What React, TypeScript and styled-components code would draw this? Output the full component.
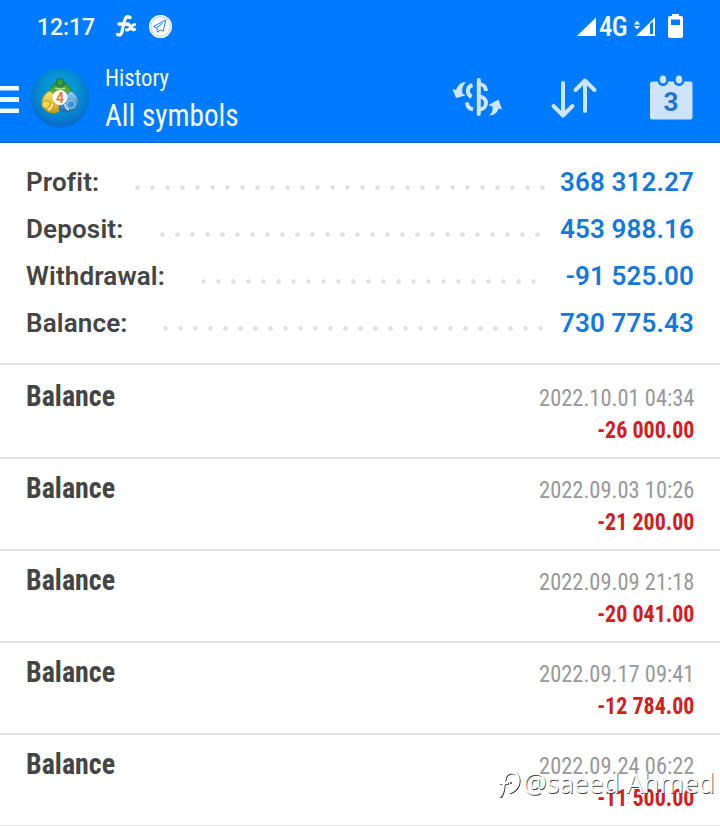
import React from "react";
import styled, { createGlobalStyle } from "styled-components";

const Global = createGlobalStyle`
  * { box-sizing: border-box; }
  body { margin: 0; background: #fff; overflow: hidden; font-family: Roboto, "Liberation Sans", sans-serif; }
`;

const Screen = styled.main`
  position: relative;
  width: 720px;
  height: 826px;
  overflow: hidden;
  background: #fff;
`;

const Header = styled.header`
  height: 143px;
  background: #007aff;
  border-bottom: 1px solid #0a68cf;
  color: #f4fbff;
`;

const StatusBar = styled.div`
  display: flex;
  align-items: center;
  height: 54px;
  padding: 0 36px 0 37px;
`;

const Clock = styled.span`
  width: 77px;
  font-size: 23px;
  font-weight: 500;
  letter-spacing: -0.1px;
`;

const StatusGroup = styled.div`
  display: flex;
  align-items: center;
  margin-left: auto;
`;

const Network = styled.span`
  width: 32px;
  padding-left: 2px;
  font-family: "Roboto Condensed", Roboto, sans-serif;
  font-stretch: 75%;
  font-size: 27px;
  font-weight: 500;
  line-height: 30px;
  letter-spacing: -0.8px;
`;

const AppBar = styled.div`
  display: flex;
  height: 88px;
`;

const Drawing = styled.svg`
  display: block;
  flex: none;
`;

const Titles = styled.div`
  width: 347px;
  padding-left: 16px;
  font-family: "Roboto Condensed", Roboto, sans-serif;
  font-stretch: 75%;
`;

const Overline = styled.div`
  height: 44px;
  padding-top: 10px;
  font-size: 24px;
  line-height: 29px;
  transform: scaleX(0.945);
  transform-origin: left;
`;

const Title = styled.h1`
  margin: 0;
  font-size: 31.5px;
  font-weight: 450;
  line-height: 36px;
  transform: scaleX(0.928);
  transform-origin: left;
`;

const Summary = styled.section`
  height: 222px;
  padding: 16px 26px 0;
  border-bottom: 2px solid #e3e3e3;
`;

const SummaryRow = styled.div`
  display: flex;
  height: 47px;
  line-height: 47px;
  font-size: 26px;
  font-weight: 600;
`;

const Label = styled.span<{ $width: number }>`
  width: ${(p) => p.$width}px;
  color: #454545;
  letter-spacing: 0.15px;
`;

const Leader = styled.span<{ $dots: number }>`
  width: ${(p) => p.$dots * 15}px;
  height: 5px;
  margin-top: 26px;
  background: radial-gradient(circle, #e1e1e1 1.9px, transparent 2.6px) 0 0 / 15px 5px repeat-x;
`;

const Value = styled.span`
  margin-left: auto;
  color: #1478dc;
  letter-spacing: 0.12px;
`;

const Entries = styled.section`
  padding-top: 2px;
`;

const Entry = styled.article`
  display: flex;
  justify-content: space-between;
  height: 92px;
  padding: 0 26px;
  border-bottom: 2px solid #e3e3e3;
  font-family: "Roboto Condensed", Roboto, sans-serif;
  font-stretch: 75%;
`;

const Kind = styled.span`
  padding-top: 11px;
  font-size: 30px;
  font-weight: 700;
  line-height: 36px;
  color: #454545;
  transform: scaleX(0.932);
  transform-origin: left;
`;

const Details = styled.div`
  padding-top: 15px;
  text-align: right;
  font-size: 24.5px;
  line-height: 32px;
`;

const Time = styled.div`
  color: #999;
  transform: scaleX(0.917);
  transform-origin: right;
`;

const Amount = styled.div`
  font-weight: 700;
  color: #d0201f;
  transform: scaleX(0.898);
  transform-origin: right;
`;

const Watermark = styled.div`
  position: absolute;
  left: 497px;
  top: 765px;
  display: flex;
  align-items: center;
  color: #fff;
  font: 400 26.5px/36px "Open Sans", "Noto Sans", sans-serif;
  letter-spacing: -0.08px;
  text-shadow: 0.7px 0.7px 0 #444;
  white-space: nowrap;
`;

const summary = [
  { label: "Profit:", value: "368 312.27", width: 104, dots: 28 },
  { label: "Deposit:", value: "453 988.16", width: 128.5, dots: 26 },
  { label: "Withdrawal:", value: "-91 525.00", width: 170, dots: 23 },
  { label: "Balance:", value: "730 775.43", width: 132, dots: 26 },
];

const entries = [
  ["2022.10.01 04:34", "-26 000.00"],
  ["2022.09.03 10:26", "-21 200.00"],
  ["2022.09.09 21:18", "-20 041.00"],
  ["2022.09.17 09:41", "-12 784.00"],
  ["2022.09.24 06:22", "-11 500.00"],
];

function NotificationIcons() {
  return (
    <Drawing width="60" height="30" viewBox="114 12 60 30" fill="none" stroke="#f4fbff">
      <path d="M130 17.5c-3-2-5 0-6 5l-2 9c-.6 3-2 4-4.500 3M119 24h9" strokeWidth="3.4" strokeLinecap="round" />
      <path d="M127.5 24.500c3.500-1 2.500 6 7 5M134.500 24.500c-2.500 0-4.500 6-8 5.500" strokeWidth="3.2" strokeLinecap="round" />
      <circle cx="160.5" cy="26.5" r="11.5" fill="#fff" stroke="none" />
      <circle cx="160.5" cy="26.5" r="9.8" stroke="#7eb8fb" strokeWidth=".7" />
      <path d="M165.8 20 153.5 26.5l3.2 1.5 1 4.3 2.6-2.4 2.8 1.4zM156.7 28l6-5" stroke="#247fe0" strokeWidth="1" strokeLinejoin="round" />
    </Drawing>
  );
}

function MenuAndLogo() {
  return (
    <Drawing width="89" height="88" viewBox="0 54 89 88">
      <defs>
        <radialGradient id="disc" cx="50%" cy="40%" r="60%">
          <stop offset="0" stopColor="#08acd8" />
          <stop offset=".55" stopColor="#068fd2" />
          <stop offset="1" stopColor="#0569c8" />
        </radialGradient>
        <linearGradient id="green" x2="0" y2="1">
          <stop stopColor="#268c3a" />
          <stop offset="1" stopColor="#8bcf4d" />
        </linearGradient>
        <linearGradient id="gold" x2="0" y2="1">
          <stop stopColor="#f7e968" />
          <stop offset="1" stopColor="#c99b1e" />
        </linearGradient>
        <linearGradient id="blue" x2="0" y2="1">
          <stop stopColor="#9bd6f7" />
          <stop offset="1" stopColor="#1769b4" />
        </linearGradient>
      </defs>
      <path d="M0 86h19v4.5H0zM0 97h19v5H0zM0 108.5h19v4.500H0z" fill="#effaff" />
      <circle cx="60" cy="98" r="29.5" fill="url(#disc)" />
      <path d="M49 97c0-9 4-15 11.500-15s11.500 6 11.500 15l-5 3-14 1z" fill="url(#green)" stroke="#24763e" strokeWidth=".7" />
      <path d="M50 91c-7 3-10 10-7 16 3 6 11 8 17 4l1-11z" fill="url(#gold)" stroke="#8e892b" strokeWidth=".7" />
      <path d="M71 91c7 4 9 11 6 16-4 6-12 7-18 3l1-10z" fill="url(#blue)" stroke="#286da0" strokeWidth=".7" />
      <circle cx="60.2" cy="82.5" r="4" fill="#359a43" stroke="#176438" strokeWidth=".8" />
      <path d="M55 88q5.500 2 10.500 0" fill="none" stroke="#b3e37a" strokeWidth="1.5" />
      <circle cx="46" cy="104.5" r="4" fill="#f2d84a" stroke="#a58d1e" strokeWidth=".7" />
      <path d="M52 104q0 4-4 6" fill="none" stroke="#fff6a6" strokeWidth="1.5" />
      <circle cx="71" cy="104.5" r="4" fill="#3d91d4" stroke="#b8e4fa" strokeWidth=".8" />
      <path d="M65 104q0 4 4 6" fill="none" stroke="#cdefff" strokeWidth="1.5" />
      <circle cx="60" cy="97.5" r="7.5" fill="#fff" />
      <text x="60" y="102.5" textAnchor="middle" fill="#e57737" fontFamily="Roboto, sans-serif" fontSize="14" fontWeight="600">4</text>
    </Drawing>
  );
}

function Signal() {
  return (
    <Drawing width="20" height="30" viewBox="577 12 20 30">
      <path d="m577 36 19-18.5V36z" fill="#fff" />
    </Drawing>
  );
}

function WeakSignalAndBattery() {
  return (
    <Drawing width="55" height="30" viewBox="629 12 55 30" fill="#fff">
      <path d="m634 24.5 3-4 3 4zM634 26h6l-3 3.500z" />
      <path fillRule="evenodd" d="m636 36 19-18.500V36zm14-12v10h3V21.500z" />
      <path fillRule="evenodd" d="M672 14h7v2h2q2 0 2 2v18q0 2-2 2h-11q-2 0-2-2V18q0-2 2-2h2zm-1 5.500v5.500h9v-5.500z" />
    </Drawing>
  );
}

function Tools() {
  return (
    <Drawing width="260" height="88" viewBox="436 54 260 88" fill="none" stroke="#cbe6fe">
      <g strokeWidth="4" strokeLinecap="round" strokeLinejoin="round">
        <path d="M478.800 80v34" />
        <path d="M486 91c0-4-3-7-7.500-7M478.500 96.500c10 0 10 13 0 13M472.500 85c-6 2-6 9-1 12M467 102.500c0 4 2 6 6 7" strokeLinecap="butt" />
        <path d="M563 83v32m-9.500-9 9.500 9.500 9.500-9.500M585 111V80.500m-9.500 9.500 9.500-9.500 9.500 9.500" />
      </g>
      <path d="M466 82c-5 0-8 3-10 8l-3.500-1 3.500 9 9.500-2.500-3-2c-1-5 .5-8 3.500-11.500zM489 115.500c3-2 4-5 3.500-9l-4-1.500 10-5.500 3.500 10-3.500-1c-1 4-4 7-9.500 7z" fill="#cbe6fe" stroke="none" />
      <path d="M653 81.5h5c0 6 10 6 10 0h6c0 6 10 6 10 0h6q2.500 0 2.500 2.500v33q0 2.500-2.500 2.500h-37.500q-2.500 0-2.500-2.500v-33q0-2.500 3-2.500z" fill="#cee3fc" stroke="none" />
      <ellipse cx="663" cy="79.5" rx="3.2" ry="4" fill="#cee3fc" stroke="none" />
      <ellipse cx="679" cy="79.5" rx="3.2" ry="4" fill="#cee3fc" stroke="none" />
      <text x="671" y="111" textAnchor="middle" fill="#2375d0" stroke="none" fontFamily="Roboto, sans-serif" fontSize="26" fontWeight="700">3</text>
    </Drawing>
  );
}

function WatermarkMark() {
  return (
    <Drawing width="26" height="36" viewBox="0 0 26 36" fill="none" strokeLinecap="round">
      <g stroke="#333" strokeWidth="2.5" transform="translate(.8 .8)">
        <path d="M3 31c4-2 3-13 5-19 2-6 11-6 13 0 2 7-2 13-8 15M3 18h7" />
      </g>
      <path d="M3 31c4-2 3-13 5-19 2-6 11-6 13 0 2 7-2 13-8 15M3 18h7" stroke="#fff" strokeWidth="2.5" />
      <circle cx="14" cy="18" r="1" fill="#333" />
    </Drawing>
  );
}

export default function App() {
  return (
    <Screen>
      <Global />
      <Header>
        <StatusBar>
          <Clock>12:17</Clock>
          <NotificationIcons />
          <StatusGroup>
            <Signal />
            <Network>4G</Network>
            <WeakSignalAndBattery />
          </StatusGroup>
        </StatusBar>
        <AppBar>
          <MenuAndLogo />
          <Titles>
            <Overline>History</Overline>
            <Title>All symbols</Title>
          </Titles>
          <Tools />
        </AppBar>
      </Header>
      <Summary>
        {summary.map((row) => (
          <SummaryRow key={row.label}>
            <Label $width={row.width}>{row.label}</Label>
            <Leader $dots={row.dots} />
            <Value>{row.value}</Value>
          </SummaryRow>
        ))}
      </Summary>
      <Entries>
        {entries.map(([time, amount]) => (
          <Entry key={time}>
            <Kind>Balance</Kind>
            <Details>
              <Time>{time}</Time>
              <Amount>{amount}</Amount>
            </Details>
          </Entry>
        ))}
      </Entries>
      <Watermark>
        <WatermarkMark />
        @saeed Ahmed
      </Watermark>
    </Screen>
  );
}
